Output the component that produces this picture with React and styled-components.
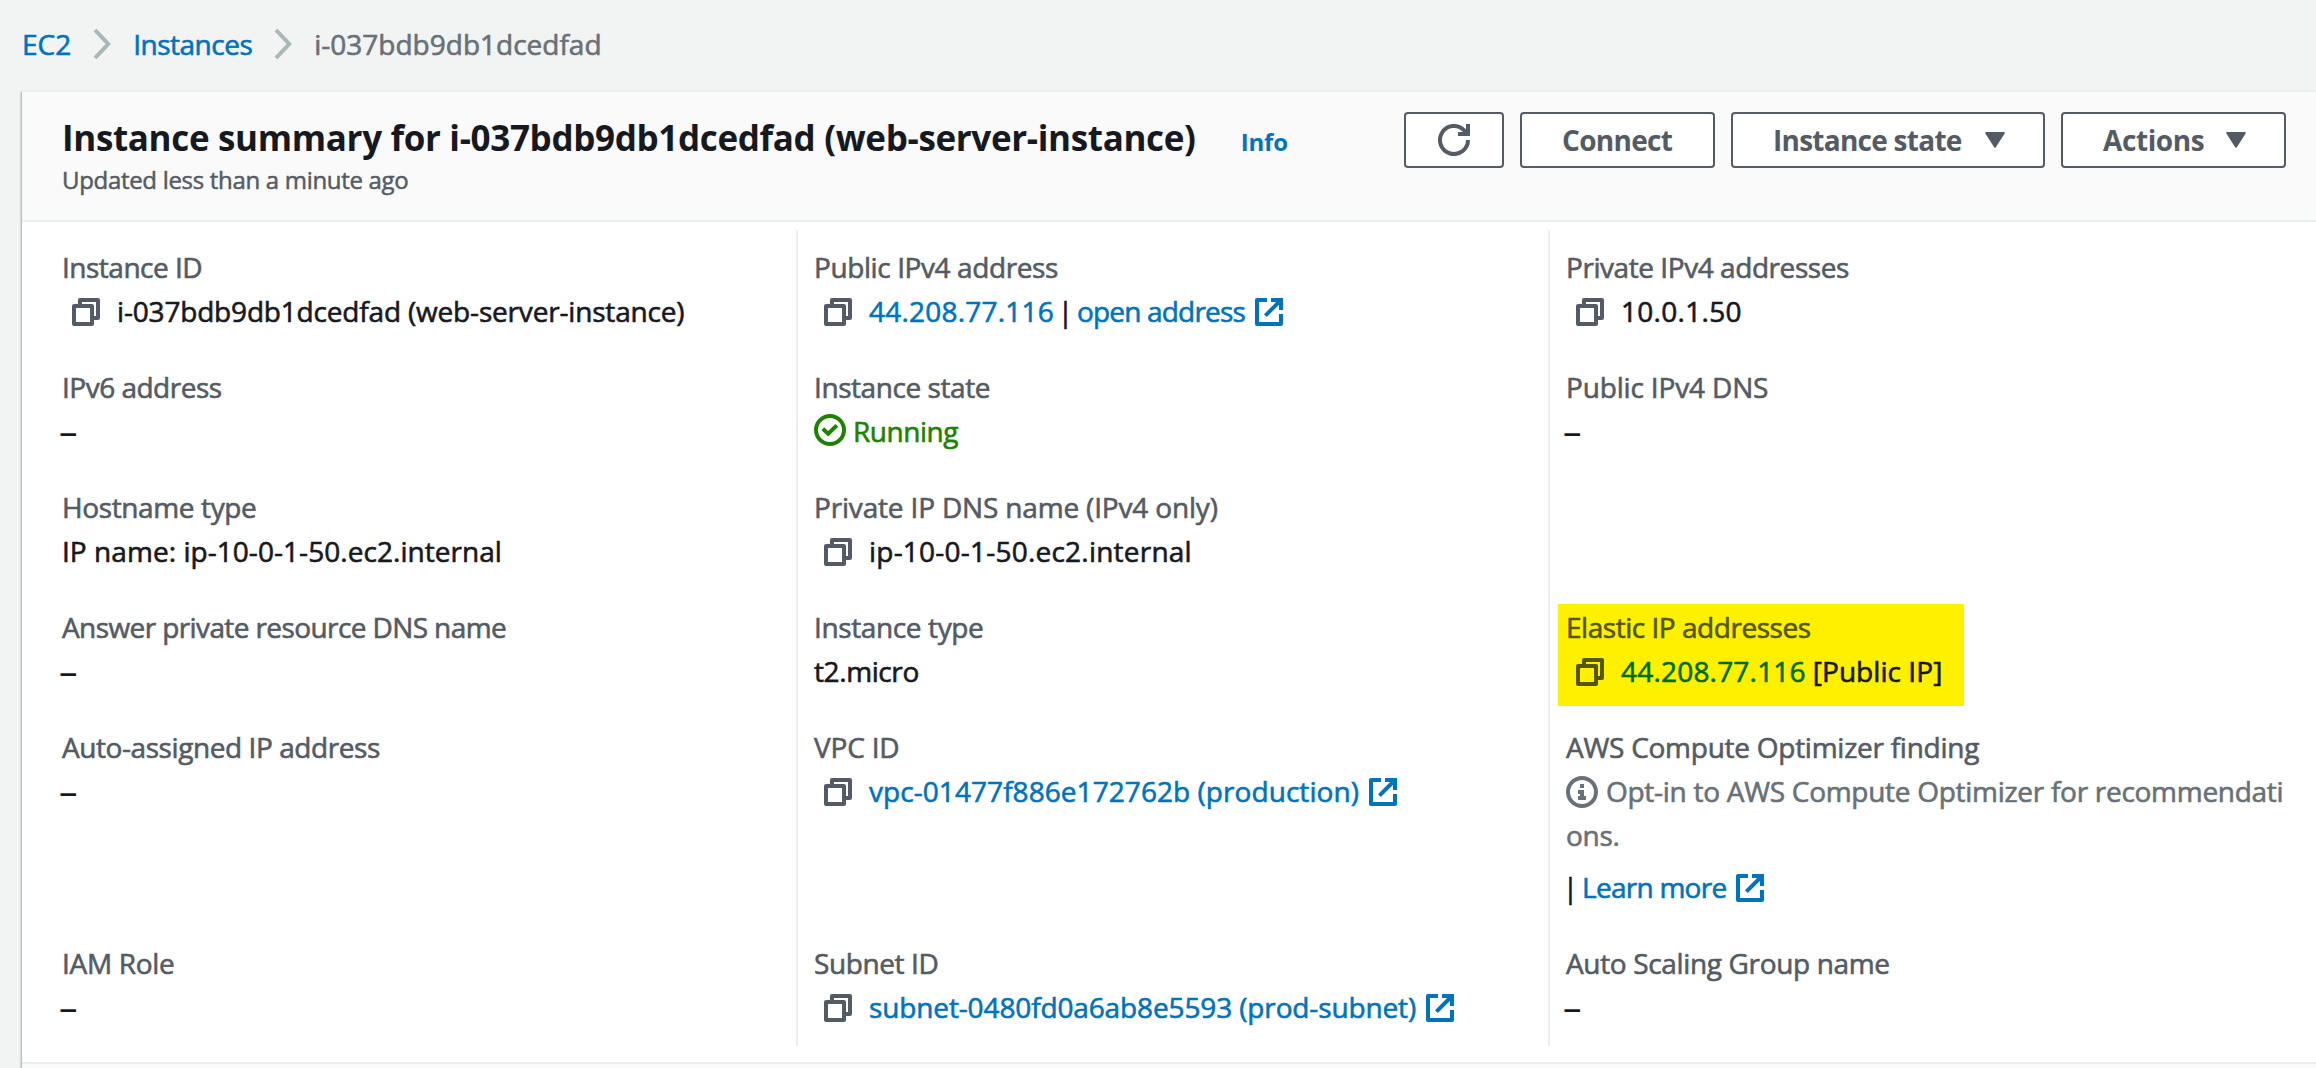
import React from "react";
import styled, { createGlobalStyle } from "styled-components";

const color = {
  page: "#f2f3f3",
  header: "#fafafa",
  line: "#eaeded",
  text: "#16191f",
  label: "#545b64",
  muted: "#687078",
  link: "#0073bb",
  success: "#1d8102",
  chevron: "#aab7b8",
};

const GlobalStyle = createGlobalStyle`
  html, body { margin: 0; height: 100%; overflow: hidden; background: ${color.page}; }
  * { box-sizing: border-box; }
  body {
    font-family: "Open Sans", "Noto Sans", sans-serif;
    font-size: 28px;
    line-height: 44px;
    color: ${color.text};
  }
  svg { display: block; flex: none; }
`;

const Page = styled.div`
  display: flex;
  flex-direction: column;
  height: 1068px;
  overflow: hidden;
`;

const Text = styled.span`
  letter-spacing: ${(p) => p.$ls || 0}px;
  color: ${(p) => p.$color || "inherit"};
  white-space: nowrap;
  -webkit-text-stroke: 0.6px currentColor;
`;

const Breadcrumbs = styled.nav`
  display: flex;
  flex: none;
  align-items: center;
  gap: 22px;
  height: 90px;
  padding: 0 0 3px 22px;
`;

const Link = styled(Text).attrs({ as: "a" })`
  color: ${(p) => p.$color || color.link};
  text-decoration: none;
`;

const Card = styled.section`
  flex: none;
  margin-left: 22px;
  border-top: 2px solid ${color.line};
  background: #fff;
  box-shadow: 0 2px 2px rgba(0, 28, 36, 0.3), -1px 2px 2px rgba(0, 28, 36, 0.25);
`;

const CardHeader = styled.header`
  display: flex;
  justify-content: space-between;
  align-items: flex-start;
  height: 130px;
  padding: 20px 30px 0 40px;
  background: ${color.header};
  border-bottom: 2px solid ${color.line};
`;

const Heading = styled.div`
  padding-top: 4px;
`;

const TitleLine = styled.div`
  display: flex;
  align-items: baseline;
  height: 44px;
  gap: 45px;
`;

const Title = styled.h1`
  margin: 0;
  font-size: 35px;
  line-height: 44px;
  font-weight: 700;
  letter-spacing: -0.34px;
  white-space: nowrap;
`;

const Info = styled.a`
  font-size: 24px;
  font-weight: 700;
  letter-spacing: -0.14px;
  color: ${color.link};
`;

const Updated = styled.p`
  margin: 2px 0 0;
  font-size: 24px;
  line-height: 36px;
  letter-spacing: -0.31px;
  color: ${color.label};
  -webkit-text-stroke: 0.5px currentColor;
`;

const Actions = styled.div`
  display: flex;
  gap: 16px;
`;

const Button = styled.button`
  display: flex;
  align-items: center;
  justify-content: ${(p) => (p.$center ? "center" : "flex-start")};
  gap: ${(p) => p.$gap || 0}px;
  width: ${(p) => p.$width}px;
  height: 56px;
  padding: 0 0 0 ${(p) => (p.$center ? 0 : 40)}px;
  border: 2px solid ${color.label};
  border-radius: 4px;
  background: #fff;
  color: ${color.label};
  font: 700 28px "Open Sans", "Noto Sans", sans-serif;
  letter-spacing: ${(p) => p.$ls || 0}px;
  white-space: nowrap;
`;

const ButtonLabel = styled.span`
  line-height: 40px;
  padding-bottom: 1px;
`;

const Columns = styled.div`
  display: grid;
  grid-template-columns: 774px 752px 1fr;
  padding: 8px 30px 16px 0;
  border-bottom: 2px solid ${color.line};
`;

const Column = styled.div`
  height: 816px;
  padding: 15px 0 0 ${(p) => (p.$first ? 40 : 16)}px;
  border-left: ${(p) => (p.$first ? "none" : `2px solid ${color.line}`)};
`;

const Cell = styled.div`
  display: flow-root;
  height: ${(p) => (p.$tall ? 216 : 120)}px;
`;

const Highlight = styled.div`
  width: 406px;
  height: 102px;
  margin: -1px 0 0 -8px;
  padding: 1px 0 0 8px;
  background: #fff000;
`;

const Label = styled.div`
  height: 44px;
  color: ${(p) => p.$color || color.label};
`;

const Value = styled.div`
  display: flex;
  height: 44px;
  margin-top: ${(p) => p.$top || 0}px;
  padding-left: ${(p) => (p.$copy ? 10 : 0)}px;
`;

const Bar = styled(Text)`
  display: flex;
  justify-content: center;
  width: ${(p) => p.$width}px;
  margin-right: ${(p) => p.$after || 0}px;
`;

const Space = styled.span`
  width: 7px;
`;

const IconSlot = styled.span`
  flex: none;
  height: 28px;
  margin: 9px ${(p) => p.$right || 0}px 0 ${(p) => p.$left || 0}px;
`;

const StatusIcon = styled.svg`
  && {
    display: inline-block;
    vertical-align: ${(p) => p.$drop}px;
    margin-right: ${(p) => p.$gap}px;
  }
`;

const Notice = styled.div`
  height: 88px;
  color: ${color.muted};
  letter-spacing: -0.28px;
  word-break: break-all;
  -webkit-text-stroke: 0.6px currentColor;
`;

const Empty = styled.div`
  height: 44px;
  margin-left: -3px;
  font-size: 37px;
`;

const Chevron = () => (
  <svg width="18" height="30" viewBox="0 0 18 30" fill="none" stroke={color.chevron} strokeWidth="4">
    <path d="M2 1L15.2 15L2 29" />
  </svg>
);

const Copy = ({ tint = color.label }) => (
  <IconSlot $right={17}>
    <svg width="28" height="28" viewBox="0 0 28 28" fill="none" stroke={tint} strokeWidth="4" strokeLinejoin="round">
      <path d="M2 8H20V26H2Z" />
      <path d="M8 7V2H26V20H21" />
    </svg>
  </IconSlot>
);

const External = () => (
  <IconSlot $left={10}>
    <svg width="28" height="28" viewBox="0 0 28 28" fill="none" stroke={color.link} strokeWidth="4">
      <path d="M12 2H2V26H26V16" strokeLinejoin="round" />
      <path d="M16 2H26V12M26 2L10.4 17.6" />
    </svg>
  </IconSlot>
);

const Refresh = () => (
  <svg width="32" height="32" viewBox="0 0 32 32" fill="none" stroke={color.label} strokeWidth="4">
    <path d="M30 16A14 14 0 1 1 26.2 6.4L29 9.6" />
    <path d="M30 0V10H20" />
  </svg>
);

const Caret = () => (
  <svg width="20" height="16" viewBox="0 0 20 16" fill={color.label} stroke={color.label} strokeWidth="2" strokeLinejoin="round">
    <path d="M1.2 1H18.8L10 14.6Z" />
  </svg>
);

const Check = () => (
  <StatusIcon $drop={-4} $gap={7} width="32" height="32" viewBox="0 0 32 32" fill="none" stroke={color.success} strokeWidth="4">
    <circle cx="16" cy="16" r="14" />
    <path d="M8.8 14.8L14.2 19.8L22.8 11.4" />
  </StatusIcon>
);

const InfoCircle = () => (
  <StatusIcon $drop={-6} $gap={8} width="32" height="32" viewBox="0 0 32 32" fill="none">
    <circle cx="16" cy="16" r="14" stroke={color.muted} strokeWidth="4" />
    <path d="M14 8h4v4h-4zM12 14h6v6h2v4h-8v-4h2v-2h-2z" fill={color.muted} />
  </StatusIcon>
);

const Field = ({ label, ls, tall, children }) => (
  <Cell $tall={tall}>
    <Label>
      <Text $ls={ls}>{label}</Text>
    </Label>
    {children || <Empty>–</Empty>}
  </Cell>
);

export default function App() {
  return (
    <Page>
      <GlobalStyle />
      <Breadcrumbs>
        <Link $ls={0}>EC2</Link>
        <Chevron />
        <Link $ls={-0.5}>Instances</Link>
        <Chevron />
        <Text $ls={0} $color={color.muted}>i-037bdb9db1dcedfad</Text>
      </Breadcrumbs>

      <Card>
        <CardHeader>
          <Heading>
            <TitleLine>
              <Title>Instance summary for i-037bdb9db1dcedfad (web-server-instance)</Title>
              <Info>Info</Info>
            </TitleLine>
            <Updated>Updated less than a minute ago</Updated>
          </Heading>
          <Actions>
            <Button $width={100} $center aria-label="Refresh"><Refresh /></Button>
            <Button $width={195} $ls={-0.7}><ButtonLabel>Connect</ButtonLabel></Button>
            <Button $width={314} $ls={-0.74} $gap={23}><ButtonLabel>Instance state</ButtonLabel><Caret /></Button>
            <Button $width={225} $ls={-0.41} $gap={22}><ButtonLabel>Actions</ButtonLabel><Caret /></Button>
          </Actions>
        </CardHeader>

        <Columns>
          <Column $first>
            <Field label="Instance ID" ls={-0.5}>
              <Value $copy><Copy /><Text $ls={-0.18}>i-037bdb9db1dcedfad (web-server-instance)</Text></Value>
            </Field>
            <Field label="IPv6 address" ls={-0.5} />
            <Field label="Hostname type" ls={-0.38}>
              <Value><Text $ls={0.05}>IP name: ip-10-0-1-50.ec2.internal</Text></Value>
            </Field>
            <Field label="Answer private resource DNS name" ls={-0.6} />
            <Field label="Auto-assigned IP address" ls={-0.43} tall />
            <Field label="IAM Role" ls={-0.31} />
          </Column>

          <Column>
            <Field label="Public IPv4 address" ls={-0.4}>
              <Value $copy>
                <Copy />
                <Link $ls={0.22}>44.208.77.116</Link>
                <Bar $width={23}>|</Bar>
                <Link $ls={-0.82}>open address</Link>
                <External />
              </Value>
            </Field>
            <Field label="Instance state" ls={-0.43}>
              <Label $color={color.success}><Check /><Text $ls={-0.45}>Running</Text></Label>
            </Field>
            <Field label="Private IP DNS name (IPv4 only)" ls={-0.17}>
              <Value $copy><Copy /><Text $ls={0.22}>ip-10-0-1-50.ec2.internal</Text></Value>
            </Field>
            <Field label="Instance type" ls={-0.38}>
              <Value><Text $ls={-0.4}>t2.micro</Text></Value>
            </Field>
            <Field label="VPC ID" ls={-0.2} tall>
              <Value $copy>
                <Copy />
                <Link $ls={0.06}>vpc-01477f886e172762b (production)</Link>
                <External />
              </Value>
            </Field>
            <Field label="Subnet ID" ls={-0.39}>
              <Value $copy>
                <Copy />
                <Link $ls={-0.13}>subnet-0480fd0a6ab8e5593 (prod-subnet)</Link>
                <External />
              </Value>
            </Field>
          </Column>

          <Column>
            <Field label="Private IPv4 addresses" ls={-0.44}>
              <Value $copy><Copy /><Text $ls={0.3}>10.0.1.50</Text></Value>
            </Field>
            <Field label="Public IPv4 DNS" ls={-0.16} />
            <Cell />
            <Cell>
              <Highlight>
                <Label $color="#545600"><Text $ls={-0.47}>Elastic IP addresses</Text></Label>
                <Value $copy>
                  <Copy tint="#545600" />
                  <Link $ls={0.2} $color="#006c00">44.208.77.116</Link>
                  <Space />
                  <Text $ls={0.06} $color="#161800">[Public IP]</Text>
                </Value>
              </Highlight>
            </Cell>
            <Field label="AWS Compute Optimizer finding" ls={-0.26} tall>
              <Notice><InfoCircle />Opt-in to AWS Compute Optimizer for recommendations.</Notice>
              <Value $top={8}>
                <Bar $width={9} $after={7}>|</Bar>
                <Link $ls={-0.73}>Learn more</Link>
                <External />
              </Value>
            </Field>
            <Field label="Auto Scaling Group name" ls={-0.35} />
          </Column>
        </Columns>
        <CardHeader />
      </Card>
    </Page>
  );
}
